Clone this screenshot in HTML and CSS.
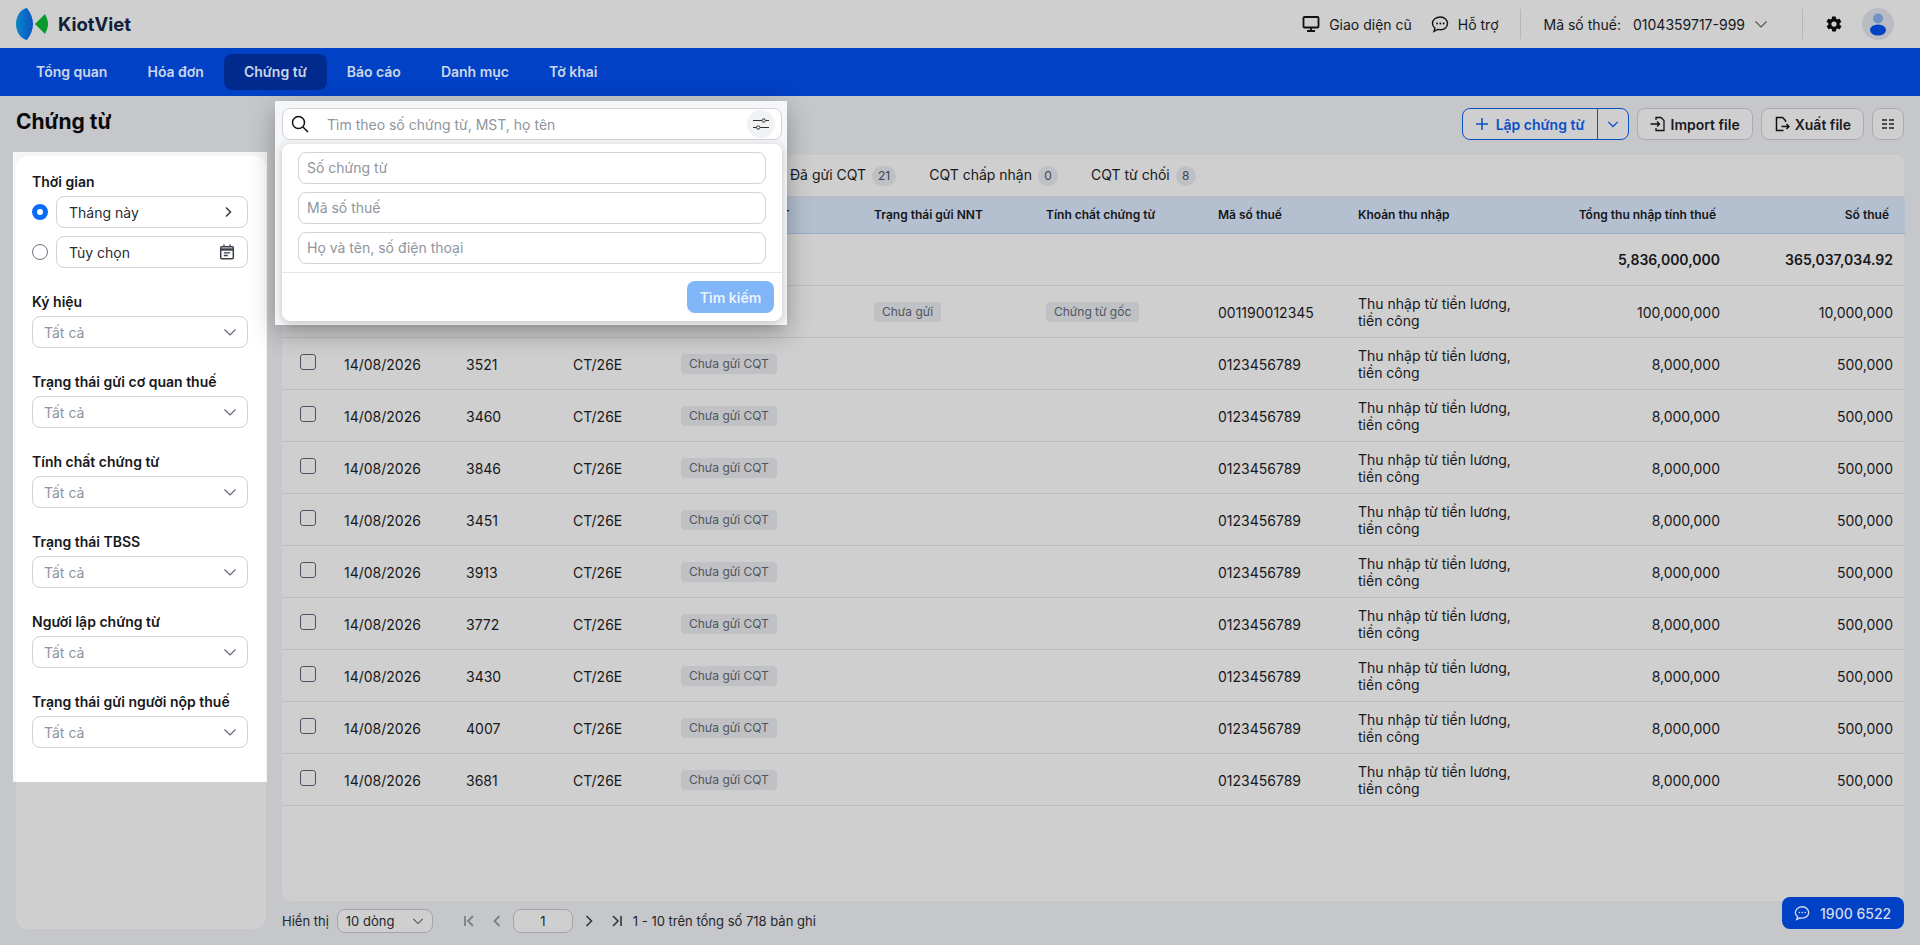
FILE: index.html
```html
<!DOCTYPE html>
<html lang="vi">
<head>
<meta charset="UTF-8">
<meta name="viewport" content="width=device-width, initial-scale=1.0">
<title>Chứng từ</title>
<link rel="stylesheet" href="styles.css">
</head>
<body>
<header class="topbar">
  <div class="logo">
    <svg width="34" height="32" viewBox="0 0 34 32"><defs><linearGradient id="lg" x1="0" x2="1"><stop offset="0" stop-color="#0a86c6"/><stop offset="1" stop-color="#0a55c4"/></linearGradient></defs><path d="M11 0C4 1 0 9 0 16s4 15 11 16c4-5 6-11 6-16S15 5 11 0z" fill="url(#lg)"/><path d="M19 16 29 6c2 4 3 7 3 10s-1 6-3 10z" fill="#0a9a2a"/></svg>
    <span class="logo-text">KiotViet</span>
  </div>
  <div class="top-actions">
    <a class="top-link"><svg width="18" height="18" viewBox="0 0 18 18" fill="none" stroke="#111" stroke-width="1.800"><rect x="1.500" y="2" width="15" height="10.500" rx="1"/><path d="M5 16h8M9 13v3"/></svg>Giao diện cũ</a>
    <a class="top-link"><svg width="18" height="18" viewBox="0 0 18 18" fill="none" stroke="#111" stroke-width="1.400"><path d="M9.500 2C5 2 1.500 4.700 1.500 8.500c0 1.900.9 3.500 2.500 4.600L3 16.300l3.800-1.900c.8.200 1.700.3 2.700.3 4 0 7-2.700 7-6.200S13.500 2 9.500 2z"/><path d="M6 8.500h.1M9.300 8.500h.1M12.600 8.500h.1" stroke-width="1.800" stroke-linecap="round"/></svg>Hỗ trợ</a>
    <span class="top-sep"></span>
    <div class="tax-code"><span>Mã số thuế:</span><span>0104359717-999</span><svg width="14" height="14" viewBox="0 0 14 14" fill="none" stroke="#555" stroke-width="1.200"><path d="M1.500 4.500 7 10l5.500-5.500"/></svg></div>
    <span class="top-sep"></span>
    <svg class="gear" width="18" height="18" viewBox="0 0 24 24" fill="#0a0a0a"><path d="M19.400 13c.1-.3.100-.7.100-1s0-.7-.1-1l2.100-1.600c.2-.2.200-.4.100-.6l-2-3.500c-.1-.2-.4-.3-.6-.2l-2.500 1c-.5-.4-1.100-.7-1.700-1l-.4-2.600c0-.3-.2-.5-.5-.5h-4c-.3 0-.5.200-.5.500l-.4 2.600c-.6.300-1.200.6-1.700 1l-2.500-1c-.2-.1-.5 0-.6.200l-2 3.500c-.1.200-.1.400.1.600L4.600 11c-.1.300-.1.700-.1 1s0 .7.100 1l-2.100 1.600c-.2.200-.2.400-.1.600l2 3.500c.1.200.4.300.6.200l2.500-1c.5.400 1.100.7 1.700 1l.4 2.600c0 .3.200.5.500.5h4c.3 0 .5-.2.500-.5l.4-2.600c.6-.3 1.200-.6 1.700-1l2.500 1c.2.100.5 0 .6-.2l2-3.500c.1-.2.1-.4-.1-.6L19.400 13zM12 15.500a3.500 3.500 0 1 1 0-7 3.500 3.500 0 0 1 0 7z"/></svg>
    <div class="avatar"><svg width="18" height="24" viewBox="0 0 18 24"><circle cx="9" cy="6.500" r="5" fill="#6f93c7"/><ellipse cx="9" cy="18" rx="8" ry="5.500" fill="#0041c6"/></svg></div>
  </div>
</header>

<nav class="mainnav">
  <a>Tổng quan</a>
  <a>Hóa đơn</a>
  <a class="active">Chứng từ</a>
  <a>Báo cáo</a>
  <a>Danh mục</a>
  <a>Tờ khai</a>
</nav>

<div class="page">
  <aside class="sidebar">
    <h1>Chứng từ</h1>
    <div class="filter-back">
      <div class="filter-spot">
        <div class="filter-card">
          <div class="filter-group">
            <label>Thời gian</label>
            <div class="radio-row">
              <span class="radio checked"></span>
              <div class="field"><span class="dark">Tháng này</span><svg width="14" height="14" viewBox="0 0 14 14" fill="none" stroke="#3a3f4a" stroke-width="1.600"><path d="M5 2.500 9.500 7 5 11.500"/></svg></div>
            </div>
            <div class="radio-row">
              <span class="radio"></span>
              <div class="field"><span class="dark">Tùy chọn</span><svg width="16" height="16" viewBox="0 0 16 16" fill="none" stroke="#3a3f4a" stroke-width="1.500"><rect x="1.700" y="2.700" width="12.600" height="12" rx="1"/><path d="M2 5.500h12" stroke-width="2.400"/><path d="M5 .5v2.500M11 .5v2.500M4.800 8.800h6.400M4.800 11.500h4" stroke-width="1.300"/></svg></div>
            </div>
          </div>
          <div class="filter-group"><label>Ký hiệu</label><div class="field select"><span>Tất cả</span><svg class="chev" width="14" height="14" viewBox="0 0 14 14"><path d="M1.500 4.500 7 10l5.500-5.500"/></svg></div></div>
          <div class="filter-group"><label>Trạng thái gửi cơ quan thuế</label><div class="field select"><span>Tất cả</span><svg class="chev" width="14" height="14" viewBox="0 0 14 14"><path d="M1.500 4.500 7 10l5.500-5.500"/></svg></div></div>
          <div class="filter-group"><label>Tính chất chứng từ</label><div class="field select"><span>Tất cả</span><svg class="chev" width="14" height="14" viewBox="0 0 14 14"><path d="M1.500 4.500 7 10l5.500-5.500"/></svg></div></div>
          <div class="filter-group"><label>Trạng thái TBSS</label><div class="field select"><span>Tất cả</span><svg class="chev" width="14" height="14" viewBox="0 0 14 14"><path d="M1.500 4.500 7 10l5.500-5.500"/></svg></div></div>
          <div class="filter-group"><label>Người lập chứng từ</label><div class="field select"><span>Tất cả</span><svg class="chev" width="14" height="14" viewBox="0 0 14 14"><path d="M1.500 4.500 7 10l5.500-5.500"/></svg></div></div>
          <div class="filter-group"><label>Trạng thái gửi người nộp thuế</label><div class="field select"><span>Tất cả</span><svg class="chev" width="14" height="14" viewBox="0 0 14 14"><path d="M1.500 4.500 7 10l5.500-5.500"/></svg></div></div>
        </div>
      </div>
    </div>
  </aside>

  <main class="content">
    <div class="toolbar">
      <div class="btn-group">
        <button class="btn-main"><svg width="14" height="14" viewBox="0 0 14 14" fill="none" stroke="#0b4fc8" stroke-width="1.500"><path d="M7 1v12M1 7h12"/></svg>Lập chứng từ</button>
        <button class="btn-drop"><svg width="12" height="12" viewBox="0 0 14 14" fill="none" stroke="#0b4fc8" stroke-width="1.500"><path d="M1.500 4.500 7 10l5.500-5.500"/></svg></button>
      </div>
      <button class="btn"><svg width="16" height="16" viewBox="0 0 16 16" fill="none" stroke="#111" stroke-width="1.300"><path d="M6 4V1.500h5l3 3v10H6V12M.5 8H9.500M7 5.500 9.500 8 7 10.500"/></svg>Import file</button>
      <button class="btn"><svg width="16" height="16" viewBox="0 0 16 16" fill="none" stroke="#111" stroke-width="1.500"><path d="M9.500 14.500h-7v-13h6l3 3V6M7.500 10.500h7.500M12.500 8l2.500 2.500-2.500 2.500"/></svg>Xuất file</button>
      <button class="btn btn-icon"><svg width="14" height="14" viewBox="0 0 14 14" fill="none" stroke="#222" stroke-width="1.300"><path d="M1 3h5M8 3h5M1 7h5M8 7h5M1 11h5M8 11h5"/></svg></button>
    </div>

    <div class="panel">
      <div class="tabs">
        <span class="tab">Đã gửi CQT <b>21</b></span>
        <span class="tab">CQT chấp nhận <b>0</b></span>
        <span class="tab">CQT từ chối <b>8</b></span>
      </div>
      <table class="grid">
        <colgroup>
          <col class="c-check"><col class="c-date"><col class="c-num"><col class="c-sym"><col class="c-cqt"><col class="c-nnt"><col class="c-kind"><col class="c-mst"><col class="c-type"><col class="c-total"><col class="c-tax">
        </colgroup>
        <thead>
          <tr>
            <th></th><th></th><th></th><th></th><th>Trạng thái gửi CQT</th><th>Trạng thái gửi NNT</th><th>Tính chất chứng từ</th><th>Mã số thuế</th><th>Khoản thu nhập</th><th class="right">Tổng thu nhập tính thuế</th><th class="right">Số thuế</th>
          </tr>
        </thead>
        <tbody>
          <tr class="sum"><td colspan="9"></td><td class="right">5,836,000,000</td><td class="right">365,037,034.92</td></tr>
          <tr><td colspan="5"></td><td><span class="tag">Chưa gửi</span></td><td><span class="tag">Chứng từ gốc</span></td><td>001190012345</td><td class="wrap">Thu nhập từ tiền lương, tiền công</td><td class="right">100,000,000</td><td class="right">10,000,000</td></tr>
          <tr><td><span class="check"></span></td><td>14/08/2026</td><td>3521</td><td>CT/26E</td><td><span class="tag">Chưa gửi CQT</span></td><td></td><td></td><td>0123456789</td><td class="wrap">Thu nhập từ tiền lương, tiền công</td><td class="right">8,000,000</td><td class="right">500,000</td></tr>
          <tr><td><span class="check"></span></td><td>14/08/2026</td><td>3460</td><td>CT/26E</td><td><span class="tag">Chưa gửi CQT</span></td><td></td><td></td><td>0123456789</td><td class="wrap">Thu nhập từ tiền lương, tiền công</td><td class="right">8,000,000</td><td class="right">500,000</td></tr>
          <tr><td><span class="check"></span></td><td>14/08/2026</td><td>3846</td><td>CT/26E</td><td><span class="tag">Chưa gửi CQT</span></td><td></td><td></td><td>0123456789</td><td class="wrap">Thu nhập từ tiền lương, tiền công</td><td class="right">8,000,000</td><td class="right">500,000</td></tr>
          <tr><td><span class="check"></span></td><td>14/08/2026</td><td>3451</td><td>CT/26E</td><td><span class="tag">Chưa gửi CQT</span></td><td></td><td></td><td>0123456789</td><td class="wrap">Thu nhập từ tiền lương, tiền công</td><td class="right">8,000,000</td><td class="right">500,000</td></tr>
          <tr><td><span class="check"></span></td><td>14/08/2026</td><td>3913</td><td>CT/26E</td><td><span class="tag">Chưa gửi CQT</span></td><td></td><td></td><td>0123456789</td><td class="wrap">Thu nhập từ tiền lương, tiền công</td><td class="right">8,000,000</td><td class="right">500,000</td></tr>
          <tr><td><span class="check"></span></td><td>14/08/2026</td><td>3772</td><td>CT/26E</td><td><span class="tag">Chưa gửi CQT</span></td><td></td><td></td><td>0123456789</td><td class="wrap">Thu nhập từ tiền lương, tiền công</td><td class="right">8,000,000</td><td class="right">500,000</td></tr>
          <tr><td><span class="check"></span></td><td>14/08/2026</td><td>3430</td><td>CT/26E</td><td><span class="tag">Chưa gửi CQT</span></td><td></td><td></td><td>0123456789</td><td class="wrap">Thu nhập từ tiền lương, tiền công</td><td class="right">8,000,000</td><td class="right">500,000</td></tr>
          <tr><td><span class="check"></span></td><td>14/08/2026</td><td>4007</td><td>CT/26E</td><td><span class="tag">Chưa gửi CQT</span></td><td></td><td></td><td>0123456789</td><td class="wrap">Thu nhập từ tiền lương, tiền công</td><td class="right">8,000,000</td><td class="right">500,000</td></tr>
          <tr><td><span class="check"></span></td><td>14/08/2026</td><td>3681</td><td>CT/26E</td><td><span class="tag">Chưa gửi CQT</span></td><td></td><td></td><td>0123456789</td><td class="wrap">Thu nhập từ tiền lương, tiền công</td><td class="right">8,000,000</td><td class="right">500,000</td></tr>
        </tbody>
      </table>
    </div>

    <div class="pager">
      <span>Hiển thị</span>
      <div class="page-size"><span>10 dòng</span><svg width="12" height="12" viewBox="0 0 14 14" fill="none" stroke="#555" stroke-width="1.300"><path d="M1.500 4.500 7 10l5.500-5.500"/></svg></div>
      <div class="page-nav">
        <svg width="14" height="14" viewBox="0 0 14 14" fill="none" stroke="#7b7f87" stroke-width="1.800"><path d="M3 2v10M11 2 6 7l5 5"/></svg>
        <svg width="14" height="14" viewBox="0 0 14 14" fill="none" stroke="#7b7f87" stroke-width="1.800"><path d="M9.500 2 4.500 7l5 5"/></svg>
        <div class="page-input">1</div>
        <svg width="14" height="14" viewBox="0 0 14 14" fill="none" stroke="#33363c" stroke-width="1.600"><path d="M4.500 2l5 5-5 5"/></svg>
        <svg width="14" height="14" viewBox="0 0 14 14" fill="none" stroke="#33363c" stroke-width="1.600"><path d="M3 2l5 5-5 5M11 2v10"/></svg>
      </div>
      <span class="page-info">1 - 10 trên tổng số 718 bản ghi</span>
    </div>
  </main>
</div>

<div class="search-spot">
  <div class="search-box">
    <svg width="18" height="18" viewBox="0 0 18 18" fill="none" stroke="#111" stroke-width="1.500"><circle cx="7.500" cy="7.500" r="6"/><path d="m12 12 5 5"/></svg>
    <span class="search-text">Tìm theo số chứng từ, MST, họ tên</span>
    <span class="tune"><svg width="16" height="16" viewBox="0 0 16 16" fill="none" stroke="#333" stroke-width="1"><path d="M0 4.500h9M12.500 4.500H16M0 11.500h3.500M7 11.500h9"/><circle cx="10.700" cy="4.500" r="1.700"/><circle cx="5.200" cy="11.500" r="1.700"/></svg></span>
  </div>
  <div class="search-drop">
    <div class="search-fields">
      <div class="search-input">Số chứng từ</div>
      <div class="search-input">Mã số thuế</div>
      <div class="search-input">Họ và tên, số điện thoại</div>
    </div>
    <div class="search-foot"><button class="btn-search">Tìm kiếm</button></div>
  </div>
</div>

<a class="hotline"><svg width="16" height="16" viewBox="0 0 18 18" fill="none" stroke="#d3dbea" stroke-width="1.500"><path d="M9.500 2C5 2 1.500 4.700 1.500 8.500c0 1.900.9 3.500 2.500 4.600L3 16.300l3.800-1.900c.8.200 1.700.3 2.700.3 4 0 7-2.700 7-6.200S13.500 2 9.500 2z"/><path d="M6 8.500h.1M9.300 8.500h.1M12.600 8.500h.1" stroke-width="1.800" stroke-linecap="round"/></svg>1900 6522</a>
</body>
</html>
```

FILE: styles.css
```css
* {
  box-sizing: border-box;
}

body {
  margin: 0;
  height: 945px;
  overflow: hidden;
  background: #c6c7ca;
  font-family: Inter, "Noto Sans", sans-serif;
  font-size: 14px;
  color: #17181b;
}

/* top bar */
.topbar {
  height: 48px;
  background: #cfcfcf;
  display: flex;
  align-items: center;
  justify-content: space-between;
  padding: 0 26px 0 16px;
}

.logo {
  display: flex;
  align-items: center;
  gap: 8px;
}

.logo-text {
  font-size: 18.5px;
  font-weight: 700;
  color: #10203a;
}

.top-actions {
  display: flex;
  align-items: center;
}

.top-link {
  display: flex;
  align-items: center;
  gap: 9px;
  margin-right: 21px;
}

.top-link:first-child {
  margin-right: 19px;
}

.top-sep {
  width: 1px;
  height: 30px;
  background: #b5b6b9;
}

.tax-code {
  display: flex;
  align-items: center;
  gap: 12px;
  margin: 0 34px 0 23px;
}

.tax-code svg {
  margin-left: -3px;
}

.gear {
  margin: 0 19px 0 22px;
}

.avatar {
  width: 32px;
  height: 32px;
  border-radius: 50%;
  background: #b9bcc2;
  display: flex;
  align-items: center;
  justify-content: center;
}

/* nav */
.mainnav {
  height: 48px;
  background: #0041c6;
  display: flex;
  align-items: center;
  padding: 0 16px;
}

.mainnav a {
  height: 36px;
  line-height: 36px;
  padding: 0 20px;
  border-radius: 8px;
  color: #cdd6e8;
  font-weight: 600;
}

.mainnav a.active {
  background: #002a8e;
}

/* layout */
.page {
  display: flex;
  height: 849px;
}

.sidebar {
  width: 282px;
  flex: none;
  padding-left: 16px;
}

.sidebar h1 {
  margin: 0;
  height: 60px;
  line-height: 52px;
  font-size: 21px;
  font-weight: 700;
  color: #0a0a0a;
}

.filter-back {
  width: 250px;
  height: 777px;
  background: #cfcfcf;
  border-radius: 12px;
}

.filter-spot {
  margin: -4px 0 0 -3px;
  width: 254px;
  height: 630px;
  padding: 4px 1px 0 3px;
  background: #f5f6f8;
  position: relative;
}

.filter-card {
  height: 100%;
  background: #fff;
  border-radius: 12px 12px 0 0;
  padding: 16px 18px 0 16px;
}

.filter-group {
  margin-bottom: 24px;
}

.filter-group label {
  display: block;
  height: 20px;
  line-height: 20px;
  font-weight: 600;
  margin-bottom: 4px;
}

.radio-row {
  display: flex;
  align-items: center;
  gap: 8px;
  margin-bottom: 8px;
}

.radio-row:last-child {
  margin-bottom: 0;
}

.radio-row .field {
  flex: 1;
}

.radio {
  width: 16px;
  height: 16px;
  border-radius: 50%;
  border: 1px solid #6b7280;
  flex: none;
}

.radio.checked {
  border: 5px solid #0a6cf5;
}

.field {
  height: 32px;
  border: 1px solid #d1d3d8;
  border-radius: 8px;
  padding: 0 12px;
  display: flex;
  align-items: center;
  justify-content: space-between;
  color: #8f949d;
}

.field.select {
  padding: 0 10px 0 11px;
}

.field .dark {
  color: #2a2d33;
}

.chev {
  fill: none;
  stroke: #5f6570;
  stroke-width: 1.2;
}

/* toolbar */
.content {
  flex: 1;
  padding-right: 16px;
  min-width: 0;
}

.toolbar {
  height: 59px;
  padding-top: 12px;
  display: flex;
  justify-content: flex-end;
  gap: 8px;
}

button {
  font: inherit;
}

.btn,
.btn-group {
  height: 32px;
  border-radius: 8px;
  background: #cfcfcf;
}

.btn {
  display: flex;
  align-items: center;
  gap: 5px;
  padding: 0 12px;
  border: 1px solid #a9abb0;
  font-weight: 600;
  color: #1a1b1f;
}

.btn-icon {
  width: 32px;
  padding: 0;
  justify-content: center;
}

.btn-group {
  display: flex;
  border: 1px solid #0b4fc8;
  color: #0b4fc8;
}

.btn-main,
.btn-drop {
  background: transparent;
  border: 0;
  display: flex;
  align-items: center;
  color: inherit;
  font-weight: 600;
}

.btn-main {
  gap: 7px;
  width: 135px;
  justify-content: center;
  border-right: 1px solid #0b4fc8;
}

.btn-drop {
  width: 30px;
  justify-content: center;
}

/* table panel */
.panel {
  height: 746px;
  background: #cfcfcf;
  border-radius: 8px;
}

.tabs {
  height: 42px;
  display: flex;
  align-items: center;
  gap: 33px;
  padding: 1px 0 0 508px;
  border-bottom: 1px solid #b9babd;
}

.tab b {
  display: inline-block;
  min-width: 20px;
  height: 20px;
  line-height: 20px;
  margin-left: 2px;
  padding: 0 6px;
  border-radius: 10px;
  background: #bfc0c4;
  color: #3c4350;
  font-size: 12px;
  font-weight: 400;
  text-align: center;
}

.grid {
  width: 100%;
  table-layout: fixed;
  border-collapse: collapse;
}

.c-check { width: 50px; }
.c-date { width: 122px; }
.c-num { width: 107px; }
.c-sym { width: 108px; }
.c-cqt { width: 193px; }
.c-nnt { width: 172px; }
.c-kind { width: 172px; }
.c-mst { width: 140px; }
.c-type { width: 220px; }
.c-total { width: 166px; }
.c-tax { width: 173px; }

.grid th {
  height: 36px;
  background: #b4c0d0;
  border-bottom: 1px solid #96aecb;
  padding: 0 12px;
  text-align: left;
  font-size: 12px;
  font-weight: 600;
  color: #14161a;
  white-space: nowrap;
}

.grid th.right {
  padding-right: 16px;
}

.grid td {
  height: 52px;
  padding: 2px 12px 0;
  border-bottom: 1px solid #bcbdc0;
  line-height: 17px;
  white-space: nowrap;
}

.grid td.wrap {
  white-space: normal;
  padding-right: 36px;
}

.grid .right {
  text-align: right;
}

.grid .sum td {
  padding-top: 0;
  font-weight: 600;
}

.check {
  display: block;
  width: 16px;
  height: 16px;
  margin: -4px 0 0 6px;
  border: 1px solid #4b5563;
  border-radius: 3px;
}

.tag {
  display: inline-block;
  height: 20px;
  line-height: 19px;
  padding: 0 8px;
  border-radius: 4px;
  background: #c0c1c4;
  color: #4f5560;
  font-size: 12px;
}

/* pager */
.pager {
  height: 40px;
  display: flex;
  align-items: center;
  font-size: 13px;
  color: #24262b;
}

.page-size {
  width: 96px;
  height: 24px;
  margin-left: 8px;
  padding: 0 8px;
  border: 1px solid #a3a5aa;
  border-radius: 8px;
  background: #cfcfcf;
  display: flex;
  align-items: center;
  justify-content: space-between;
}

.page-nav {
  display: flex;
  align-items: center;
  gap: 14px;
  margin: 0 9px 0 29px;
}

.page-input {
  width: 60px;
  height: 24px;
  line-height: 22px;
  margin: 0 -5px;
  border: 1px solid #a3a5aa;
  border-radius: 8px;
  background: #cfcfcf;
  text-align: center;
}

/* search popup */
.search-spot {
  position: absolute;
  left: 275px;
  top: 101px;
  width: 512px;
  height: 224px;
  padding: 7px 5px 0 7px;
  background: #f5f6f8;
  box-shadow: 0 8px 24px rgba(0, 0, 0, 0.3);
}

.search-box {
  height: 32px;
  background: #fff;
  border: 1px solid #d1d3d8;
  border-radius: 8px;
  display: flex;
  align-items: center;
  padding: 0 6px 0 8px;
}

.search-text {
  flex: 1;
  margin-left: 18px;
  color: #8f949d;
}

.tune {
  width: 28px;
  height: 28px;
  border-radius: 50%;
  background: #f1f2f4;
  display: flex;
  align-items: center;
  justify-content: center;
}

.search-drop {
  margin-top: 4px;
  height: 177px;
  background: #fff;
  border-radius: 8px;
  box-shadow: 0 2px 8px rgba(0, 0, 0, 0.22);
}

.search-fields {
  padding: 8px 16px;
  display: flex;
  flex-direction: column;
  gap: 8px;
  border-bottom: 1px solid #e5e6e9;
}

.search-input {
  height: 32px;
  line-height: 30px;
  padding: 0 8px;
  border: 1px solid #d1d3d8;
  border-radius: 8px;
  color: #8f949d;
}

.search-foot {
  display: flex;
  justify-content: flex-end;
  padding: 8px;
}

.btn-search {
  width: 87px;
  height: 32px;
  border: 0;
  border-radius: 8px;
  background: #80b5f7;
  color: #eaf2fd;
  font-weight: 600;
}

/* hotline */
.hotline {
  position: absolute;
  left: 1782px;
  top: 897px;
  width: 122px;
  height: 32px;
  background: #0041c6;
  border-radius: 8px;
  color: #d3dbea;
  font-weight: 500;
  display: flex;
  align-items: center;
  gap: 10px;
  padding-left: 12px;
}
```
